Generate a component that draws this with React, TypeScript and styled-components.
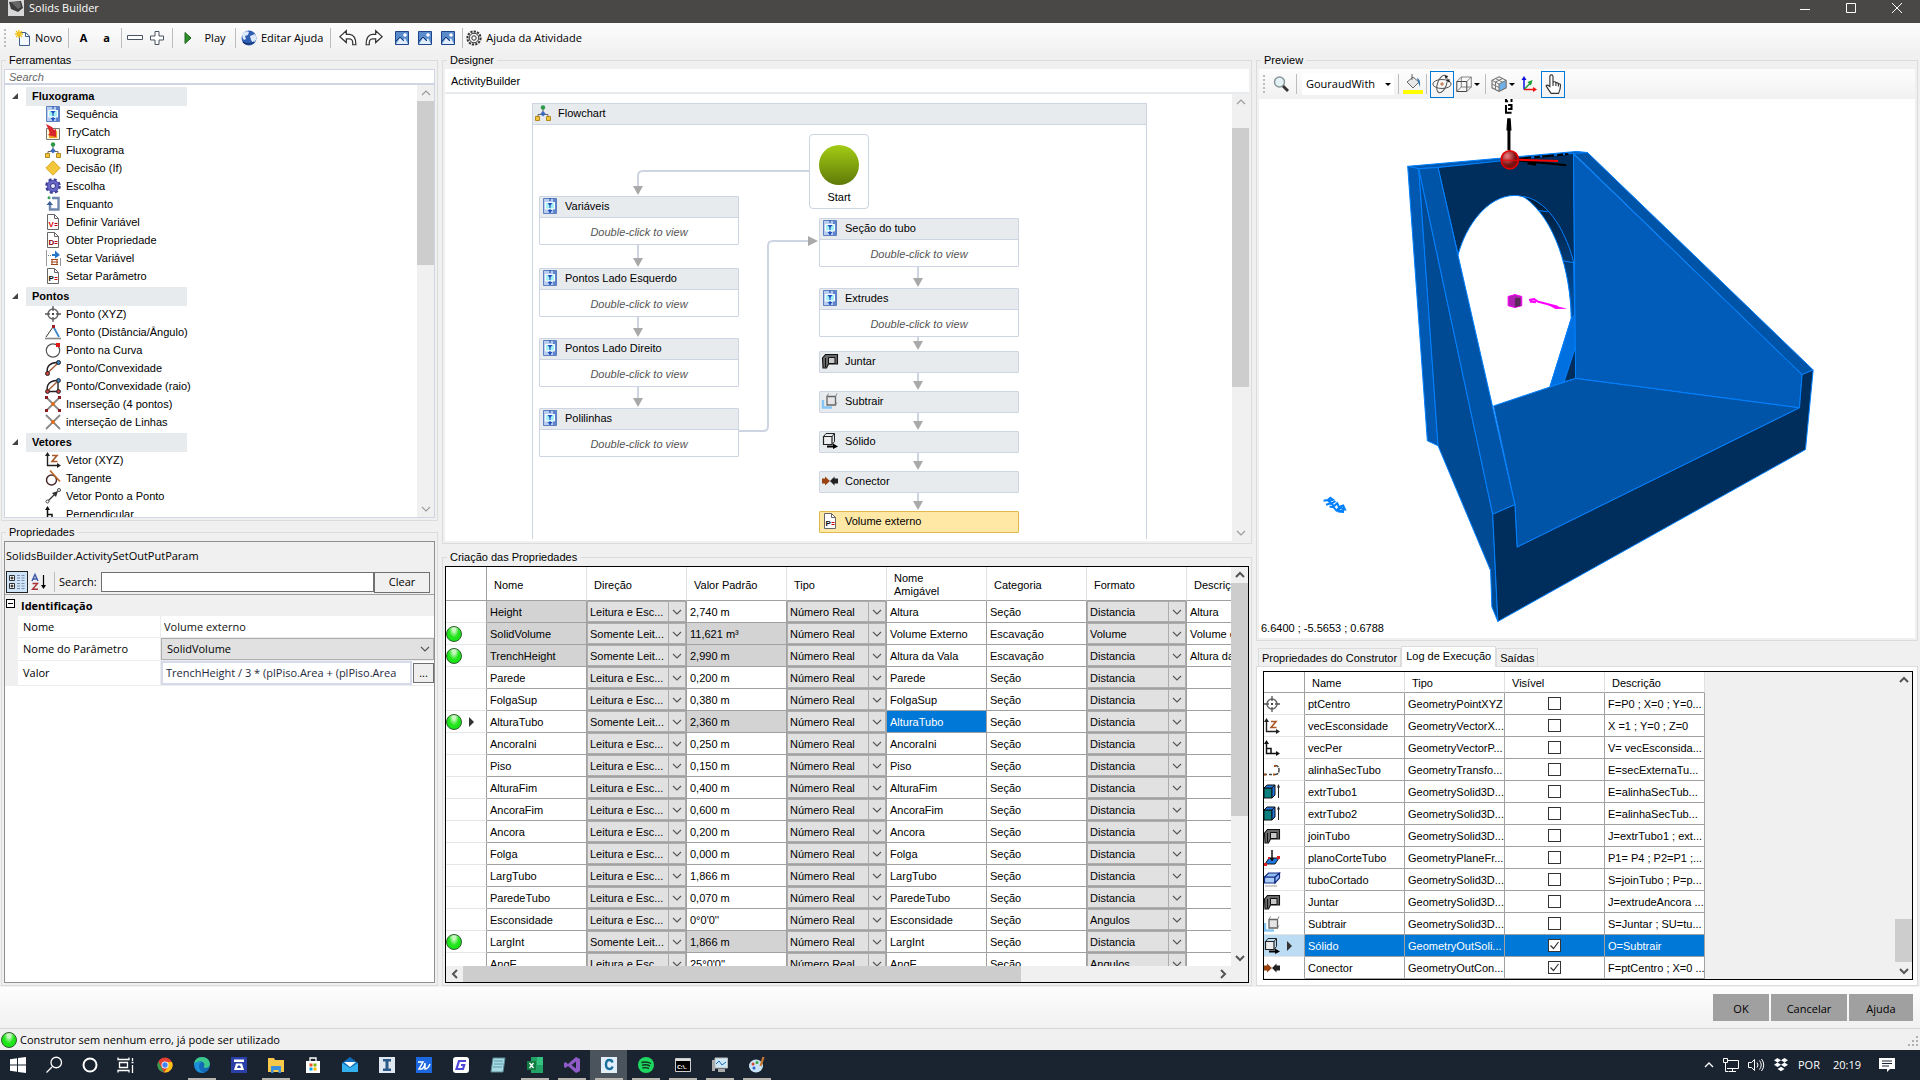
import React from "react";
import styled, { createGlobalStyle, css } from "styled-components";

const SANS = `"Liberation Sans", Arial, sans-serif`;
const SEGOE = `"Open Sans", "Noto Sans", sans-serif`;

const Global = createGlobalStyle`
  *, *::before, *::after { box-sizing: border-box; }
  body { margin: 0; background: #f0f0f0; color: #000; font: 11px/14px ${SANS}; }
  button, input, select { font: inherit; color: inherit; margin: 0; }
`;

/* ---------- icons ---------- */

type IconName =
  | "app" | "new" | "minus" | "plus" | "play" | "globe" | "undo" | "redo" | "picture" | "gear"
  | "sequence" | "trycatch" | "flow" | "decision" | "switch" | "while" | "docV" | "docD" | "docP" | "setvar"
  | "point" | "angle" | "curve" | "bulge" | "bulgeR" | "cross4" | "cross" | "vector" | "tangent" | "p2p" | "perp"
  | "join" | "subtract" | "solid" | "connector" | "align" | "extrude" | "plane" | "cut"
  | "zoom" | "bucket" | "orbit" | "wire" | "shaded" | "axes" | "hand"
  | "categories" | "sort";

const doc = (letter: string, color: string) => (
  <>
    <path d="M2.500 .5h7l4 4v11h-11z" fill="#fff" stroke="#666" />
    <path d="M9.500 .5v4h4" fill="none" stroke="#666" />
    <text x="3.500" y="13" fontSize="8" fontWeight="700" fill={color}>{letter}</text>
    <path d="M9.500 9.500h3M9.500 11.500h3" stroke="#c00000" />
  </>
);

const art: Record<IconName, React.ReactNode> = {
  app: (<><path d="M0 0h16v16H0z" fill="#d8d8d8" /><path d="M1 2l12 -1 2 7 -5 4 -7 -3z" fill="#3c3c3c" /><path d="M3 2l9 0 1 5 -3 2z" fill="#666" /></>),
  new: (<><path d="M4.500 2.500h6l4 3.500v9.500h-10z" fill="#f4f9ff" stroke="#3d5f8f" /><path d="M10.500 2.500v4h4" fill="none" stroke="#3d5f8f" /><path d="M4 0v8M0 4h8M1 1l6 6M7 1l-6 6" stroke="#f0c01c" strokeWidth="1.300" /></>),
  minus: <path d="M.5 5.500h15v4H.5z" fill="#fff" stroke="#4a5564" />,
  plus: <path d="M6 1.500h4v4.500h4.500v4H10v4.500H6V10H1.500V6H6z" fill="#fff" stroke="#4a5564" />,
  play: <path d="M5 2.500l6 5.500 -6 5.500z" fill="#2f8f2a" stroke="#1c641a" />,
  globe: (<><circle cx="8" cy="8" r="7.500" fill="#2f5fb4" /><path d="M1 4q4 -4 7 -2l-1 3 -3 1 1 3 -2 1q-2 -2 -2 -6zM9 6l5 -2q2 3 1 6l-3 3 -2 -3z" fill="#dce9f8" /><path d="M2 12q5 4 11 0" stroke="#16316e" fill="none" strokeWidth="1.500" /></>),
  undo: <path d="M.8 6.800L6.500 1.500v3.200h3q5.500 .5 5.500 9.300h-2.800q.5 -5.300 -3 -5.300H6.500V12z" fill="#fff" stroke="#333" strokeWidth="1.100" />,
  redo: <path d="M15.200 6.800L9.500 1.500v3.200h-3Q1 5.200 1 14h2.800q-.5 -5.300 3 -5.300h2.700V12z" fill="#fff" stroke="#333" strokeWidth="1.100" />,
  picture: (<><path d="M1.500 1.500h13v13h-13z" fill="#5a8ccc" stroke="#1f458c" /><path d="M2 14l4 -6 3 3 2 -3 3 6z" fill="#e3eefb" /><circle cx="11" cy="5" r="1.800" fill="#fff" /><path d="M2 11l4 -4 4 4" stroke="#173a7d" fill="none" /></>),
  gear: (<><circle cx="8" cy="8" r="6.600" fill="#eee" stroke="#333" strokeWidth="2" strokeDasharray="2.200 1.200" /><circle cx="8" cy="8" r="4.800" fill="none" stroke="#333" /><circle cx="8" cy="8" r="2.200" fill="#fff" stroke="#333" /></>),
  sequence: (<><path d="M1.500 .5h13v15h-13z" fill="#b9cdee" stroke="#5b7fc0" /><path d="M11 1h3v14h-3z" fill="#5f86cc" /><path d="M3.500 4.500h9v6.500h-9z" fill="#a4f2f6" stroke="#fff" /><path d="M8 0v3M8 6v4M8 11v4" stroke="#2a56b5" strokeWidth="1.200" /><path d="M5.500 5h5L8 8zM5.500 12h5L8 15z" fill="#1f4fc0" /></>),
  trycatch: (<><path d="M1.500 4.500h13v11h-13z" fill="#fdf6d8" stroke="#777" /><path d="M4 7h8v7H4z" fill="#f0a020" /><path d="M1 0l6 3 2 3 2 -1 0 8 -8 -2 2 -2z" fill="#d8262c" /></>),
  flow: (<><path d="M8 3v5M3 12V9.500h10V12" stroke="#666" fill="none" /><circle cx="8" cy="2.500" r="2.200" fill="#2a9a48" /><path d="M8 6l2.700 2.700L8 11.400 5.300 8.700z" fill="#3d6bc4" /><path d="M.5 11.500h4v4h-4zM11.500 11.500h4v4h-4z" fill="#f0c63c" stroke="#b08a20" /></>),
  decision: <path d="M8 .8L15.200 8 8 15.200 .8 8z" fill="#f4c63a" stroke="#dba92c" />,
  switch: (<><circle cx="8" cy="8" r="6.300" fill="#5757b5" stroke="#3f3f94" strokeWidth="3" strokeDasharray="2.800 2.150" /><circle cx="8" cy="8" r="5.500" fill="#6666c6" /><circle cx="8" cy="8" r="2.500" fill="#e8e8ff" stroke="#33337d" /></>),
  while: (<><path d="M7 2h6.500v11.500H5V8" fill="none" stroke="#7088ad" strokeWidth="2.400" /><path d="M1.500 9l3.300 -4L8 9z" fill="#3c5f96" /><circle cx="4" cy="1.800" r="1.500" fill="#3aa455" /></>),
  docV: doc("V", "#e00000"),
  docD: doc("D", "#8a0010"),
  docP: doc("P", "#111"),
  setvar: (<><path d="M1.500 0v16M15.500 8v8" stroke="#999" /><path d="M3 5.500h3" stroke="#777" strokeDasharray="1 1" /><path d="M7 4l3 0 0 -3.500 5 4.500 -5 3.500V6H7z" fill="#2477c9" /><path d="M6 9.500h7M6 12h7M6 14.500h7M7 9v6M12 9v6" stroke="#a04818" /></>),
  point: (<><circle cx="8" cy="8" r="5" fill="none" stroke="#666" strokeWidth="1.500" /><path d="M8 0v5M8 11V16M0 8h5M11 8H16" stroke="#555" strokeWidth="1.300" /><path d="M7 7h2v2H7z" fill="#444" /></>),
  angle: (<><path d="M0 14.500h16" stroke="#888" strokeWidth="1.600" /><path d="M1 13L8 3" stroke="#333" /><path d="M8.500 3l5.500 10" stroke="#3c86c8" strokeWidth="1.800" fill="none" /><path d="M7 1h3v3H7z" fill="#a02028" /></>),
  curve: (<><circle cx="8" cy="8.500" r="6.700" fill="none" stroke="#555" strokeWidth="1.200" /><path d="M11 1h4v4h-4z" fill="#e01818" /></>),
  bulge: (<><path d="M2.500 13C1 7 5 2 13 2.500" stroke="#222" strokeWidth="1.500" fill="none" /><path d="M2.500 13L13 3" stroke="#a8603a" strokeWidth="1.500" /><circle cx="13.500" cy="2.500" r="2" fill="#3c86c8" stroke="#222" /><circle cx="2.500" cy="13.500" r="2" fill="#d04040" stroke="#222" /></>),
  bulgeR: (<><path d="M2.500 13C1 7 5 2 13 2.500V13.500H3" stroke="#222" strokeWidth="1.400" fill="none" /><path d="M2.500 13L13 3" stroke="#a8603a" strokeWidth="1.500" /><circle cx="13.500" cy="2.500" r="1.900" fill="#3c86c8" stroke="#222" /><circle cx="2.500" cy="13.500" r="1.900" fill="#d04040" stroke="#222" /><circle cx="13.500" cy="13.500" r="1.900" fill="#d04040" stroke="#222" /></>),
  cross4: (<><path d="M2 2l12 12M14 2L2 14" stroke="#888" strokeWidth="1.800" /><path d="M0 0h3v3H0zM13 0h3v3h-3zM0 13h3v3H0zM13 13h3v3h-3z" fill="#8a1c24" /><circle cx="8" cy="8" r="2" fill="#e07020" /></>),
  cross: (<><path d="M1 1l14 14M15 1L1 15" stroke="#888" strokeWidth="1.800" /><circle cx="8" cy="8" r="2" fill="#e07020" /></>),
  vector: (<><path d="M2.500 2v11.500H14" stroke="#222" strokeWidth="1.400" fill="none" /><path d="M0 4l2.500 -4L5 4zM12 11l4 2.500 -4 2.500z" fill="#222" /><path d="M7 3.500h5l-5 6h5.500" stroke="#a85a28" strokeWidth="1.600" fill="none" /></>),
  tangent: (<><circle cx="6.500" cy="10" r="5" fill="none" stroke="#4a2a2a" strokeWidth="1.500" /><path d="M5 .5l10 11" stroke="#c06a2a" strokeWidth="1.700" /></>),
  p2p: (<><path d="M3 13L12 4" stroke="#333" strokeWidth="1.300" /><path d="M7 5l6 -2 -2 6z" fill="#333" /><circle cx="2.500" cy="13.500" r="1.500" fill="#fff" stroke="#444" /><circle cx="14" cy="2" r="1.500" fill="#fff" stroke="#444" /></>),
  perp: (<><path d="M2.500 2v11.500H14M2.500 8.500h4.500v5" stroke="#111" strokeWidth="1.500" fill="none" /><path d="M0 4l2.500 -4L5 4zM12 11l4 2.500 -4 2.500z" fill="#111" /></>),
  join: (<><path d="M.5 5l3 -3.500h12v9.500h-9l-2 4H1z" fill="#6a6a6a" stroke="#111" strokeWidth="1.100" /><path d="M6.500 4.500h6.500v6h-6.500z" fill="#c9c9c9" stroke="#111" /><path d="M3.500 5v9" stroke="#111" /></>),
  subtract: (<><path d="M1 7v7.500h9" stroke="#86c6f4" strokeWidth="2.400" fill="none" /><path d="M5 3.500h8.500v8.500H5z" fill="#e6e6e6" stroke="#666" strokeWidth="1.300" /><path d="M5 3.500l1.500 -3M13.500 3.500l1.500 -3M13.500 12l1.500 -2.500" fill="none" stroke="#888" /></>),
  solid: (<><path d="M1.500 3.500h8.500v8h-8.500z" fill="#eee" stroke="#222" strokeWidth="1.200" /><path d="M1.500 3.500l2.500 -3h8.500v8l-2.500 3M10 3.500l2.500 -3" fill="none" stroke="#222" /><path d="M5 12.500h6V10.500l5 3 -5 2.500V14.500H5z" fill="#000" /></>),
  connector: (<><path d="M0 5.500h3V3.500L8 8l-5 4.500V10.500H0z" fill="#9a4312" /><path d="M16 5.500h-3.500V3.500L8 8l4.500 4.500V10.500H16z" fill="#222" /></>),
  align: (<><path d="M0 12.500h9" stroke="#444" strokeWidth="1.500" strokeDasharray="3 2" /><path d="M11 3.500q4 0 4 4.500t-4 4.500" stroke="#444" fill="none" strokeWidth="1.500" strokeDasharray="4 1" /><path d="M0 11.500h2v2H0zM9 11.500h2v2H9zM10 3h2v2h-2z" fill="#a8521c" /></>),
  extrude: (<><path d="M0 4h8v10H0z" fill="#0c8080" stroke="#111" /><path d="M0 4l3 -3h8L8 4zM8 4l3 -3v10L8 14z" fill="#1e78e0" stroke="#111" /><path d="M14.500 2v12" stroke="#222" /><path d="M13 3.500L14.500 0 16 3.500z" fill="#222" /></>),
  plane: (<><path d="M1 14l4 -6h10l-4 6z" fill="#1e78e0" stroke="#111" /><path d="M8 0v11" stroke="#111" strokeWidth="1.500" /><path d="M0 13h3v3H0zM13 6h3v3h-3zM4 7h2v2H4z" fill="#e02020" /><path d="M5.500 8h5L8 11z" fill="#111" /></>),
  cut: (<><path d="M.5 5h10.500v6H.5z" fill="#a9ccf6" stroke="#142c86" strokeWidth="1.200" /><path d="M.5 5l4 -4h11l-4 4zM11 5l4.500 -4v5l-4.500 5z" fill="#8fbdf2" stroke="#142c86" strokeWidth="1.200" /><path d="M1 13h12v2H1z" fill="#ccc" /></>),
  zoom: (<><circle cx="6.500" cy="6" r="5" fill="#e2f2f5" stroke="#8a979c" strokeWidth="1.500" /><path d="M10 10l5 5" stroke="#333" strokeWidth="2.800" /></>),
  bucket: (<><path d="M2 8l6 -5 6 5 -6 6z" fill="#e8e8e8" stroke="#666" /><path d="M7 0v6" stroke="#666" /><path d="M12 4q4 1 3 9l-2 -5z" fill="#3a78ae" /></>),
  orbit: (<><ellipse cx="8" cy="8" rx="3.600" ry="7.300" fill="none" stroke="#555" strokeWidth=".8" transform="rotate(20 8 8)" /><ellipse cx="8" cy="8" rx="7.300" ry="3.600" fill="none" stroke="#555" strokeWidth=".8" /><path d="M8 6.500v3M6.500 8h3" stroke="#b8622a" strokeWidth=".8" /><path d="M10 1l3 .5 -2 2.500zM14 4l-2.500 1 2.500 2z" fill="#222" /></>),
  wire: (<><path d="M.8 5.500h10v10h-10z" fill="none" stroke="#444" /><path d="M.8 5.500l4.500 -4.500h10v10l-4.500 4.500M10.800 5.500l4.500 -4.500M5.300 1v10h10M5.300 11L.8 15.500" fill="none" stroke="#666" strokeWidth=".8" /></>),
  shaded: (<><path d="M8 .8l7 3.500v7.500L8 15.300 1 11.800V4.300z" fill="#f4f4f4" stroke="#777" strokeWidth="1.200" /><path d="M8 8l7 -3.700v7.500L8 15.300z" fill="#6fb0e6" stroke="#777" /><path d="M1 4.300L8 8M4.500 2.500l7 3.700M4.500 6v7.500M1 8l7 3.500M11.500 2.500L4.500 6" stroke="#777" fill="none" /></>),
  axes: (<><path d="M3 2v11.500" stroke="#1010e0" strokeWidth="1.500" /><path d="M.5 4L3 0l2.500 4z" fill="#1010e0" /><path d="M3 13.500h10" stroke="#f01010" strokeWidth="1.500" /><path d="M12 11l4 2.500 -4 2.500z" fill="#f01010" /><path d="M3.500 13L10 6.500" stroke="#18a030" strokeWidth="1.500" /><path d="M6.500 6l5 -2 -1.500 5.500z" fill="#18a030" /></>),
  hand: <path d="M5.500 10V2q0 -1.300 1.200 -1.300T8 2v4.500q2 -.8 2.300 .5 1.700 -.4 2 .8 1.700 -.3 1.700 1.400 0 3 -1.500 6.300H6.500Q4 12 2.500 9.500q.6 -1.500 3 .5zM8 6.500v3M10.300 7v2.500M12.300 8v2" fill="#fff" stroke="#333" strokeWidth=".9" />,
  categories: (<><path d="M.5 1.500h5v5h-5zM.5 9.500h5v5h-5z" fill="#fff" stroke="#333" /><path d="M1.500 4h3M3 2.500v3M1.500 12h3M3 10.500v3" stroke="#000" /><path d="M8 1.500h3M12.500 1.500h3M8 4h3M12.500 4h3M8 6.500h3M12.500 6.500h3M8 9.500h3M12.500 9.500h3M8 12h3M12.500 12h3M8 14.500h3M12.500 14.500h3" stroke="#7a8db0" /></>),
  sort: (<><path d="M1 7L4 0.500 7 7M2 5h4" fill="none" stroke="#3c56a8" strokeWidth="1.400" /><path d="M1.500 9.500h5L1.500 15.300H7" fill="none" stroke="#a83238" strokeWidth="1.400" /><path d="M12.500 1v12" stroke="#000" strokeWidth="1.200" /><path d="M10 11h5l-2.500 4z" fill="#000" /></>),
};

const IconSvg = styled.svg`
  flex: none;
  display: block;
  overflow: visible;
`;
const Icon = ({ name, size = 16 }: { name: IconName; size?: number }) => (
  <IconSvg width={size} height={size} viewBox="0 0 16 16" aria-hidden="true">{art[name]}</IconSvg>
);

/* ---------- window frame ---------- */

const Window = styled.div`
  display: flex;
  flex-direction: column;
  height: 100vh;
  overflow: hidden;
`;
const TitleBar = styled.header`
  flex: none;
  display: flex;
  align-items: flex-start;
  height: 23px;
  padding-left: 8px;
  background: #4a4846;
  color: #fff;
  font: 11px/16px ${SEGOE};
`;
const Caption = styled.h1`
  flex: 1;
  margin: 0 0 0 5px;
  font: inherit;
`;
const CaptionButton = styled.button`
  width: 46px;
  height: 16px;
  padding: 0;
  border: 0;
  background: none;
  display: grid;
  place-items: center;
`;
const ToolBar = styled.div<{ $h?: number }>`
  flex: none;
  display: flex;
  align-items: center;
  height: ${(p) => p.$h ?? 29}px;
  padding: 0 4px;
  background: linear-gradient(#fdfdfd, #f1f1f1);
  font: 11px/16px ${SEGOE};
`;
const Grip = styled.span`
  width: 2px;
  height: 18px;
  margin-right: 6px;
  background: repeating-linear-gradient(#bdbdbd 0 2px, transparent 2px 4px);
`;
const ToolButton = styled.button<{ $w?: number; $active?: boolean; $bold?: boolean; $gap?: number }>`
  display: flex;
  align-items: center;
  justify-content: ${(p) => (p.$w ? "center" : "flex-start")};
  gap: ${(p) => p.$gap ?? 4}px;
  width: ${(p) => (p.$w ? p.$w + "px" : "auto")};
  height: 27px;
  padding: 0;
  border: ${(p) => (p.$active ? "1px solid #0078d7" : "0")};
  background: none;
  white-space: nowrap;
  font-weight: ${(p) => (p.$bold ? 700 : 400)};
`;
const Separator = styled.span<{ $m?: number }>`
  width: 1px;
  height: 20px;
  margin: 0 ${(p) => p.$m ?? 3}px;
  background: #bdbdbd;
`;
const Caret = styled.span`
  width: 0;
  height: 0;
  border: 3px solid transparent;
  border-top-color: #000;
  border-bottom: 0;
`;

const Main = styled.main`
  flex: 1;
  min-height: 0;
  display: grid;
  grid-template-columns: 437px minmax(0, 1fr) 662px;
  column-gap: 4px;
  padding: 1px 2px 1px 1px;
`;
const Column = styled.div<{ $gap: number }>`
  display: flex;
  flex-direction: column;
  gap: ${(p) => p.$gap}px;
  min-width: 0;
  min-height: 0;
`;
const Group = styled.fieldset<{ $h?: number }>`
  flex: ${(p) => (p.$h ? `0 0 ${p.$h}px` : "1 1 0")};
  min-width: 0;
  min-height: 0;
  margin: 0;
  padding: 2px;
  border: 1px solid #dcdcdc;
  display: flex;
  flex-direction: column;
`;
const Legend = styled.legend`
  margin-left: 2px;
  padding: 0 3px;
  height: 14px;
`;

/* ---------- scroll bars ---------- */

const Bar = styled.div<{ $x?: boolean }>`
  flex: none;
  display: flex;
  flex-direction: ${(p) => (p.$x ? "row" : "column")};
  ${(p) => (p.$x ? "height: 16px;" : "width: 17px;")}
  background: #f0f0f0;
`;
const BarButton = styled.button`
  flex: none;
  width: 17px;
  height: 16px;
  padding: 0;
  border: 0;
  background: none;
  display: grid;
  place-items: center;
`;
const Stretch = styled.span<{ $grow: number; $thumb?: boolean }>`
  flex: ${(p) => p.$grow} 1 0;
  background: ${(p) => (p.$thumb ? "#cdcdcd" : "transparent")};
`;
const turns = { up: 180, down: 0, left: 90, right: 270 };
const Chevron = ({ dir, color = "#555", w = 1.6 }: { dir: keyof typeof turns; color?: string; w?: number }) => (
  <svg width="10" height="10" viewBox="0 0 10 10" aria-hidden="true">
    <path d="M1 3l4 4 4-4" fill="none" stroke={color} strokeWidth={w} transform={`rotate(${turns[dir]} 5 5)`} />
  </svg>
);
const Scroll = ({ x, parts, faint }: { x?: boolean; parts: [number, number, number]; faint?: boolean }) => (
  <Bar $x={x}>
    <BarButton type="button" aria-label={x ? "Esquerda" : "Acima"}><Chevron dir={x ? "left" : "up"} color={faint ? "#999" : "#555"} w={faint ? 1.1 : 2} /></BarButton>
    <Stretch $grow={parts[0]} />
    <Stretch $grow={parts[1]} $thumb />
    <Stretch $grow={parts[2]} />
    <BarButton type="button" aria-label={x ? "Direita" : "Abaixo"}><Chevron dir={x ? "right" : "down"} color={faint ? "#999" : "#555"} w={faint ? 1.1 : 2} /></BarButton>
  </Bar>
);

/* ---------- toolbox ---------- */

const SearchBox = styled.input`
  flex: none;
  height: 15px;
  padding: 0 4px;
  border: 1px solid #cfd5e3;
  background: #fff;
  font-style: italic;
  outline: 0;
  &::placeholder { color: #666; opacity: 1; }
`;
const TreeFrame = styled.div`
  flex: 1;
  min-height: 0;
  display: flex;
  border: 1px solid #cfd5e3;
  background: #fff;
`;
const Tree = styled.div`
  flex: 1;
  overflow: hidden;
`;
const Category = styled.div`
  display: flex;
  align-items: center;
  height: 18px;
  margin-top: 2px;
  padding-left: 6px;
  gap: 7px;
`;
const CategoryName = styled.strong`
  width: 161px;
  height: 19px;
  padding: 0 6px;
  background: #e8ebee;
  line-height: 19px;
`;
const ToolList = styled.ul`
  margin: 0;
  padding: 0 0 0 40px;
  list-style: none;
`;
const ToolItem = styled.li`
  display: flex;
  align-items: center;
  gap: 5px;
  height: 18px;
`;

const toolbox: { name: string; items: [IconName, string][] }[] = [
  { name: "Fluxograma", items: [["sequence", "Sequência"], ["trycatch", "TryCatch"], ["flow", "Fluxograma"], ["decision", "Decisão (If)"], ["switch", "Escolha"], ["while", "Enquanto"], ["docV", "Definir Variável"], ["docD", "Obter Propriedade"], ["setvar", "Setar Variável"], ["docP", "Setar Parâmetro"]] },
  { name: "Pontos", items: [["point", "Ponto (XYZ)"], ["angle", "Ponto (Distância/Ângulo)"], ["curve", "Ponto na Curva"], ["bulge", "Ponto/Convexidade"], ["bulgeR", "Ponto/Convexidade (raio)"], ["cross4", "Inserseção (4 pontos)"], ["cross", "interseção de Linhas"]] },
  { name: "Vetores", items: [["vector", "Vetor (XYZ)"], ["tangent", "Tangente"], ["p2p", "Vetor Ponto a Ponto"], ["perp", "Perpendicular"]] },
];

const Toolbox = () => (
  <Group $h={468}>
    <Legend>Ferramentas</Legend>
    <SearchBox placeholder="Search" aria-label="Search" />
    <TreeFrame>
      <Tree>
        {toolbox.map((c) => (
          <React.Fragment key={c.name}>
            <Category>
              <svg width="8" height="8" viewBox="0 0 8 8" aria-hidden="true"><path d="M7 1v6H1z" fill="#444" /></svg>
              <CategoryName>{c.name}</CategoryName>
            </Category>
            <ToolList>
              {c.items.map(([icon, label]) => (
                <ToolItem key={label}><Icon name={icon} />{label}</ToolItem>
              ))}
            </ToolList>
          </React.Fragment>
        ))}
      </Tree>
      <Scroll faint parts={[0, 164, 237]} />
    </TreeFrame>
  </Group>
);

/* ---------- property grid ---------- */

const PropFrame = styled.div`
  flex: 1;
  display: flex;
  flex-direction: column;
  border: 1px solid #8f8f8f;
  background: #fff;
  font: 11px/16px ${SEGOE};
`;
const PropTitle = styled.div`
  height: 28px;
  padding-left: 1px;
  background: #f0f0f0;
  line-height: 27px;
`;
const PropTools = styled.div`
  display: flex;
  align-items: center;
  height: 25px;
  padding: 0 4px 0 1px;
  border-bottom: 1px solid #a0a0a0;
  background: #f0f0f0;
`;
const ModeButton = styled.button<{ $on?: boolean }>`
  width: 22px;
  height: 22px;
  padding: 0;
  display: grid;
  place-items: center;
  border: ${(p) => (p.$on ? "1px solid #222" : "0")};
  background: ${(p) => (p.$on ? "#cfe4f7" : "none")};
`;
const PropSearch = styled.input`
  flex: 1;
  min-width: 0;
  height: 20px;
  margin-left: 4px;
  border: 1px solid #707070;
  background: #fff;
`;
const ClearButton = styled.button`
  width: 56px;
  height: 21px;
  padding: 0;
  border: 1px solid #707070;
  background: #f0f0f0;
`;
const PropHeading = styled.div`
  display: flex;
  align-items: center;
  gap: 6px;
  height: 21px;
  padding-left: 1px;
  background: #f0f0f0;
  font-weight: 700;
`;
const Expander = styled.span`
  width: 9px;
  height: 9px;
  margin-bottom: 4px;
  border: 1px solid #000;
  background: linear-gradient(#000, #000) center / 5px 1px no-repeat #fff;
`;
const PropRow = styled.div<{ $h: number }>`
  display: grid;
  grid-template-columns: 142px minmax(0, 1fr);
  align-items: center;
  height: ${(p) => p.$h}px;
  margin-left: 13px;
  border-bottom: 1px solid #ececec;
  box-shadow: -13px 0 #f0f0f0;
`;
const PropLabel = styled.label`
  padding-left: 5px;
`;
const PropValue = styled.div`
  display: flex;
  gap: 1px;
  height: 100%;
  border-left: 1px solid #ececec;
`;
const PropInput = styled.input<{ $boxed?: boolean }>`
  flex: 1;
  min-width: 0;
  padding: 0 3px;
  border: ${(p) => (p.$boxed ? "2px solid #d5dbeb" : "0")};
  background: #fff;
  color: ${(p) => (p.$boxed ? "#1e2a3c" : "#111")};
`;
const MoreButton = styled.button`
  width: 21px;
  height: 20px;
  margin-top: 2px;
  padding: 0;
  border: 1px solid #707070;
  background: #eee;
`;
const Picker = styled.div<{ $bright?: boolean }>`
  flex: 1;
  display: grid;
  grid-template-columns: minmax(0, 1fr) 17px;
  align-items: center;
  height: 100%;
  border: 1px solid #adadad;
  background: #e1e1e1;
  & > select {
    grid-area: 1 / 1 / 2 / 3;
    width: 100%;
    height: 100%;
    padding: 0 18px 0 2px;
    appearance: none;
    border: 0;
    border-radius: 0;
    background: none;
    outline: 0;
  }
  & > span {
    grid-area: 1 / 2 / 2 / 3;
    height: 100%;
    display: grid;
    place-items: center;
    border-left: 1px solid #adadad;
    pointer-events: none;
  }
  ${(p) => p.$bright && css`
    & > select { padding-left: 5px; }
    & > span { border: 0; }
  `}
`;
const Combo = ({ value, label, id, bright }: { value: string; label?: string; id?: string; bright?: boolean }) => (
  <Picker $bright={bright}>
    <select id={id} aria-label={label} defaultValue={value}><option>{value}</option></select>
    <span><Chevron dir="down" w={1.1} /></span>
  </Picker>
);

const PropertyPanel = () => (
  <Group>
    <Legend>Propriedades</Legend>
    <PropFrame>
      <PropTitle>SolidsBuilder.ActivitySetOutPutParam</PropTitle>
      <PropTools>
        <ModeButton type="button" $on aria-label="Por categoria"><Icon name="categories" /></ModeButton>
        <ModeButton type="button" aria-label="Alfabética"><Icon name="sort" /></ModeButton>
        <Separator $m={4} />
        <label htmlFor="prop-search">Search:</label>
        <PropSearch id="prop-search" />
        <ClearButton type="button">Clear</ClearButton>
      </PropTools>
      <PropHeading><Expander />Identificação</PropHeading>
      <PropRow $h={22}>
        <PropLabel htmlFor="p-nome">Nome</PropLabel>
        <PropValue><PropInput id="p-nome" defaultValue="Volume externo" /></PropValue>
      </PropRow>
      <PropRow $h={23}>
        <PropLabel htmlFor="p-param">Nome do Parâmetro</PropLabel>
        <PropValue><Combo bright id="p-param" value="SolidVolume" /></PropValue>
      </PropRow>
      <PropRow $h={25}>
        <PropLabel htmlFor="p-valor">Valor</PropLabel>
        <PropValue>
          <PropInput $boxed id="p-valor" defaultValue="TrenchHeight / 3 * (plPiso.Area + (plPiso.Area" />
          <MoreButton type="button">...</MoreButton>
        </PropValue>
      </PropRow>
    </PropFrame>
  </Group>
);

/* ---------- designer ---------- */

const DesignFrame = styled.div`
  flex: 1;
  min-height: 0;
  display: flex;
  flex-direction: column;
  background: #fff;
`;
const Crumb = styled.div`
  flex: none;
  height: 25px;
  padding-left: 6px;
  border-bottom: 2px solid #e8ebee;
  line-height: 24px;
`;
const DesignBody = styled.div`
  flex: 1;
  min-height: 0;
  display: flex;
`;
const Surface = styled.div`
  flex: 1;
  display: flex;
  justify-content: center;
  overflow: hidden;
  padding: 9px 0 2px 2px;
`;
const FlowBox = styled.section`
  display: flex;
  flex-direction: column;
  width: 615px;
  border: 1px solid #cdd4e2;
  border-bottom: 0;
`;
const NodeHead = styled.div<{ $selected?: boolean }>`
  flex: none;
  display: flex;
  align-items: center;
  gap: 7px;
  height: 20px;
  padding: 0 3px 2px 2px;
  background: ${(p) => (p.$selected ? "#ffe8a6" : "#e8ebee")};
`;
const FlowHead = styled(NodeHead)`
  height: 21px;
  border-bottom: 1px solid #cdd4e2;
`;
const FlowCanvas = styled.div`
  position: relative;
  flex: 1;
`;
const Links = styled.svg`
  position: absolute;
  inset: 0;
`;
const Node = styled.article<{ $x: number; $y: number; $selected?: boolean }>`
  position: absolute;
  left: ${(p) => p.$x}px;
  top: ${(p) => p.$y}px;
  width: 200px;
  border: 1px solid ${(p) => (p.$selected ? "#e0b94c" : "#cdd4e2")};
  border-radius: 1px;
  background: #fff;
`;
const NodeHint = styled.div`
  height: 27px;
  border-top: 1px solid #cdd4e2;
  color: #555;
  font-style: italic;
  line-height: 28px;
  text-align: center;
`;
const StartNode = styled.div`
  position: absolute;
  left: 276px;
  top: 9px;
  width: 60px;
  height: 75px;
  padding-top: 10px;
  border: 1px solid #cdd4e2;
  border-radius: 4px;
  background: #fff;
  text-align: center;
`;
const StartDisc = styled.div`
  width: 40px;
  height: 40px;
  margin: 0 auto 5px;
  border-radius: 50%;
  background: linear-gradient(#a3cc14, #5f7a08);
`;

const nodes: { icon: IconName; title: string; x: number; y: number; hint?: boolean; selected?: boolean }[] = [
  { icon: "sequence", title: "Variáveis", x: 6, y: 71, hint: true },
  { icon: "sequence", title: "Pontos Lado Esquerdo", x: 6, y: 143, hint: true },
  { icon: "sequence", title: "Pontos Lado Direito", x: 6, y: 213, hint: true },
  { icon: "sequence", title: "Polilinhas", x: 6, y: 283, hint: true },
  { icon: "sequence", title: "Seção do tubo", x: 286, y: 93, hint: true },
  { icon: "sequence", title: "Extrudes", x: 286, y: 163, hint: true },
  { icon: "join", title: "Juntar", x: 286, y: 226 },
  { icon: "subtract", title: "Subtrair", x: 286, y: 266 },
  { icon: "solid", title: "Sólido", x: 286, y: 306 },
  { icon: "connector", title: "Conector", x: 286, y: 346 },
  { icon: "docP", title: "Volume externo", x: 286, y: 386, selected: true },
];
const drops: [number, number, number][] = [
  [105, 120, 143], [105, 192, 213], [105, 262, 283],
  [385, 142, 163], [385, 212, 226], [385, 248, 266], [385, 288, 306], [385, 328, 346], [385, 368, 386],
];
const headAt = (x: number, tip: number) => `M${x - 5} ${tip - 10}h10l-5 9z`;

const Designer = () => (
  <Group $h={491}>
    <Legend>Designer</Legend>
    <DesignFrame>
      <Crumb>ActivityBuilder</Crumb>
      <DesignBody>
        <Surface>
          <FlowBox>
            <FlowHead><Icon name="flow" />Flowchart</FlowHead>
            <FlowCanvas>
              <Links width="613" height="414" viewBox="0 0 613 414" aria-hidden="true">
                <g fill="none" stroke="#cdd4e2" strokeWidth="2">
                  <path d="M276 46H110q-5 0 -5 5V62" />
                  <path d="M206 306h24q5 0 5 -5V121q0 -5 5 -5H276" />
                  {drops.map(([x, a, b], i) => <path key={i} d={`M${x} ${a}V${b - 9}`} />)}
                </g>
                <g fill="#a9a9a9">
                  <path d={headAt(105, 71)} />
                  <path d="M275 111v10l10 -5z" />
                  {drops.map(([x, , b], i) => <path key={i} d={headAt(x, b)} />)}
                </g>
              </Links>
              <StartNode><StartDisc />Start</StartNode>
              {nodes.map((n) => (
                <Node key={n.title} $x={n.x} $y={n.y} $selected={n.selected}>
                  <NodeHead $selected={n.selected}><Icon name={n.icon} />{n.title}</NodeHead>
                  {n.hint && <NodeHint>Double-click to view</NodeHint>}
                </Node>
              ))}
            </FlowCanvas>
          </FlowBox>
        </Surface>
        <Scroll faint parts={[18, 256, 136]} />
      </DesignBody>
    </DesignFrame>
  </Group>
);

/* ---------- data grids ---------- */

const GridFrame = styled.div`
  flex: 1;
  min-height: 0;
  display: flex;
  border: 1px solid #000;
  background: #f0f0f0;
`;
const GridStack = styled.div`
  flex: 1;
  min-width: 0;
  display: flex;
  flex-direction: column;
`;
const GridClip = styled.div`
  flex: 1;
  min-width: 0;
  min-height: 0;
  overflow: hidden;
`;
const SideBar = styled.div`
  flex: none;
  display: flex;
  padding-bottom: 16px;
`;
const Grid = styled.table<{ $w: number }>`
  width: ${(p) => p.$w}px;
  table-layout: fixed;
  border-collapse: separate;
  border-spacing: 0;
  background: #fff;
`;
const Th = styled.th<{ $h: number }>`
  height: ${(p) => p.$h}px;
  padding: 3px 20px 0 7px;
  border-right: 1px solid #e0e0e0;
  border-bottom: 1px solid #a0a0a0;
  line-height: 13px;
  font-weight: 400;
  text-align: left;
  &:first-child { border-right-color: #a0a0a0; }
`;
const Td = styled.td<{ $shade?: boolean; $picked?: boolean; $combo?: boolean; $center?: boolean }>`
  height: 22px;
  padding: ${(p) => (p.$combo ? 0 : "0 3px")};
  border-right: 1px solid #a0a0a0;
  border-bottom: 1px solid #a0a0a0;
  background: ${(p) => (p.$picked ? "#0078d7" : p.$shade ? "#d3d3d3" : "#fff")};
  color: ${(p) => (p.$picked ? "#fff" : "#000")};
  text-align: ${(p) => (p.$center ? "center" : "left")};
  line-height: 14px;
  white-space: nowrap;
  overflow: hidden;
  & > ${Picker} { height: 21px; }
`;
const RowHead = styled.th<{ $picked?: boolean }>`
  height: 22px;
  padding: 0;
  border-right: 1px solid #a0a0a0;
  border-bottom: 1px solid #e5e5e5;
  background: ${(p) => (p.$picked ? "#bcdcf4" : "#fff")};
`;
const RowMarks = styled.div`
  display: flex;
  align-items: center;
  gap: 7px;
`;
const Lamp = styled.span`
  width: 16px;
  height: 16px;
  border: 1px solid #2b5a2b;
  border-radius: 50%;
  background: radial-gradient(ellipse at 50% 15%, #c9f7c0 0 15%, #22e61c 50%, #0fe00f);
`;
const Pointer = styled.span`
  border: 5px solid transparent;
  border-left-color: #333;
  border-right: 0;
`;
const Tick = styled.input`
  display: block;
  appearance: none;
  width: 13px;
  height: 13px;
  margin: 0 auto;
  border: 1px solid #333;
  background: #fff;
  &:checked {
    background: #fff url("data:image/svg+xml,%3Csvg xmlns='http://www.w3.org/2000/svg' viewBox='0 0 11 11'%3E%3Cpath d='M1.5 5.500l3 3 5-6.500' fill='none' stroke='%23333' stroke-width='1.200'/%3E%3C/svg%3E");
  }
`;

const LE = "Leitura e Esc...";
const SL = "Somente Leit...";
type Param = { n: string; d: string; v: string; a: string; c: string; f: string; t?: string; ro?: boolean; ok?: boolean; cur?: boolean };
const P = (n: string, v: string, extra: Partial<Param> = {}): Param => ({ n, d: LE, v, a: n, c: "Seção", f: "Distancia", ...extra });
const params: Param[] = [
  P("Height", "2,740 m", { a: "Altura", t: "Altura", ro: true }),
  P("SolidVolume", "11,621 m³", { d: SL, a: "Volume Externo", c: "Escavação", f: "Volume", t: "Volume externo", ro: true, ok: true }),
  P("TrenchHeight", "2,990 m", { d: SL, a: "Altura da Vala", c: "Escavação", t: "Altura da Vala", ro: true, ok: true }),
  P("Parede", "0,200 m"),
  P("FolgaSup", "0,380 m"),
  P("AlturaTubo", "2,360 m", { d: SL, ok: true, cur: true }),
  P("AncoraIni", "0,250 m"),
  P("Piso", "0,150 m"),
  P("AlturaFim", "0,400 m"),
  P("AncoraFim", "0,600 m"),
  P("Ancora", "0,200 m"),
  P("Folga", "0,000 m"),
  P("LargTubo", "1,866 m"),
  P("ParedeTubo", "0,070 m"),
  P("Esconsidade", "0°0'0''", { f: "Angulos" }),
  P("LargInt", "1,866 m", { d: SL, ok: true }),
  P("AngE", "25°0'0''", { f: "Angulos" }),
];

const ParamGrid = () => (
  <Group>
    <Legend>Criação das Propriedades</Legend>
    <GridFrame>
      <GridStack>
        <GridClip>
          <Grid $w={841}>
            <colgroup><col width="41" />{Array.from({ length: 8 }, (_, i) => <col key={i} width="100" />)}</colgroup>
            <thead>
              <tr>
                <Th $h={34} />
                {["Nome", "Direção", "Valor Padrão", "Tipo", "Nome Amigável", "Categoria", "Formato", "Descrição"].map((h) => <Th key={h} $h={34} scope="col">{h}</Th>)}
              </tr>
            </thead>
            <tbody>
              {params.map((p) => (
                <tr key={p.n}>
                  <RowHead><RowMarks>{p.ok && <Lamp />}{p.cur && <Pointer />}</RowMarks></RowHead>
                  <Td $shade={p.ro}>{p.n}</Td>
                  <Td $combo><Combo label="Direção" value={p.d} /></Td>
                  <Td $shade={p.d === SL}>{p.v}</Td>
                  <Td $combo><Combo label="Tipo" value="Número Real" /></Td>
                  <Td $picked={p.cur}>{p.a}</Td>
                  <Td>{p.c}</Td>
                  <Td $combo><Combo label="Formato" value={p.f} /></Td>
                  <Td>{p.t}</Td>
                </tr>
              ))}
            </tbody>
          </Grid>
        </GridClip>
        <Scroll x parts={[0, 558, 193]} />
      </GridStack>
      <SideBar><Scroll parts={[0, 233, 134]} /></SideBar>
    </GridFrame>
  </Group>
);

/* ---------- preview ---------- */

const ShadeSelect = styled.div`
  display: grid;
  grid-template-columns: minmax(0, 1fr) 12px;
  align-items: center;
  width: 92px;
  height: 22px;
  background: #fff;
  & > select {
    grid-area: 1 / 1 / 2 / 2;
    width: 100%;
    padding: 0 0 0 4px;
    appearance: none;
    border: 0;
    background: none;
    outline: 0;
  }
  & > ${Caret} { justify-self: center; }
`;
const Swatch = styled.span`
  display: grid;
  justify-items: center;
  width: 20px;
  border-bottom: 4px solid #ff0;
`;
const Viewport = styled.div`
  flex: 1;
  min-height: 0;
  display: flex;
  flex-direction: column;
  justify-content: space-between;
  overflow: hidden;
  background: #fff;
`;
const Scene = styled.svg`
  flex: none;
  display: block;
  & path, & polygon { vector-effect: non-scaling-stroke; }
`;
const Coords = styled.output`
  margin-top: -18px;
  padding: 0 2px 4px;
`;

const Model = () => (
  <Scene width="658" height="540" viewBox="21 128 1540 1411" preserveAspectRatio="none" role="img" aria-label="Modelo 3D">
    <defs>
      <linearGradient id="rim" x1="0" y1="0" x2="0" y2="1"><stop offset="0" stopColor="#001a35" /><stop offset="1" stopColor="#0056ac" /></linearGradient>
      <radialGradient id="ball" cx=".35" cy=".3"><stop offset="0" stopColor="#f08080" /><stop offset="1" stopColor="#7a1010" /></radialGradient>
    </defs>
    <g stroke="#0080ff" strokeWidth="1" strokeLinejoin="round">
      <polygon points="369,304 765,265 790,268 757,272 440,307 395,310" fill="#0058b0" />
      <path d="M440 307L757 270 762 858 702 880 752 700C752 560 700 380 620 380 555 380 505 460 487 535z" fill="#002e5c" />
      <path d="M640 383C690 390 735 460 757 552L760 700 752 702C750 580 715 440 640 383z" fill="url(#rim)" />
      <path d="M673 419l24 4M733 551l25 5" fill="none" />
      <polygon points="752,702 762,690 762,775 735,867 702,880" fill="#0070e0" />
      <polygon points="762,775 762,858 735,867" fill="#002e5c" />
      <polygon points="757,272 1292,848 1286,935 762,858" fill="#005cb8" />
      <polygon points="757,270 790,268 1318,836 1292,848" fill="#0054a8" />
      <polygon points="570,930 762,858 1286,935 625,1299 620,1188" fill="#0054a8" />
      <polygon points="369,304 395,310 440,1034 415,1021" fill="#0058b0" />
      <polygon points="395,310 568,1213 580,1493 566,1455 563,1360 440,1034" fill="#004a94" />
      <polygon points="395,310 440,307 620,1188 568,1213" fill="#0054a8" />
      <polygon points="568,1213 620,1188 625,1299 1286,935 1292,848 1318,836 1300,1044 580,1493" fill="#002e5c" />
    </g>
    <g fill="none" stroke="#000">
      <path d="M606 262V185" strokeWidth="3" />
      <path d="M630 284L745 272" strokeWidth="2" strokeDasharray="12 3 6 2" />
      <path d="M625 288L740 301" strokeWidth="2" />
      <path d="M650 292l20 4" strokeWidth="5" />
      <path d="M599 128v6h5M612 128v8M599 144v20h13M604 144h8v10h-8" strokeWidth="2" />
    </g>
    <path d="M600 210l2-32h8l2 32z" fill="#000" />
    <path d="M630 287L721 290" stroke="#f00" strokeWidth="2" />
    <ellipse cx="608" cy="287" rx="20" ry="24" fill="url(#ball)" stroke="#e00000" strokeWidth="4" />
    <path d="M588 288h40" stroke="#f00" />
    <path d="M604 644l16-5 16 5v24l-16 5-16-5z" fill="#b020b0" stroke="#f0f" />
    <path d="M620 648h13v20l-13 4z" fill="#5a2a5a" />
    <path d="M653 653l12-2 8 6 47 14M655 657l14 2" stroke="#f0f" strokeWidth="2" fill="none" />
    <path d="M690 662l53 14-28 1z" fill="#f0f" />
    <path d="M172 1178l10-2 6-6 6 5-10 4 6 6 10-6M178 1188l12-4 6 8 8-8 4 10 10-4 4 10-12-4-4 8 14 0M186 1193l10 2 6 8 6-6M206 1206l14 1" fill="none" stroke="#0080ff" strokeWidth="2" />
  </Scene>
);

const Preview = () => (
  <Group $h={588}>
    <Legend>Preview</Legend>
    <ToolBar $h={30}>
      <Grip />
      <ToolButton type="button" $w={20} aria-label="Zoom"><Icon name="zoom" /></ToolButton>
      <Separator $m={5} />
      <ShadeSelect>
        <select aria-label="Sombreamento" defaultValue="GouraudWith"><option>GouraudWith</option></select>
        <Caret />
      </ShadeSelect>
      <Separator $m={4} />
      <ToolButton type="button" $w={20} aria-label="Cor"><Swatch><Icon name="bucket" /></Swatch></ToolButton>
      <Separator />
      <ToolButton type="button" $w={24} $active aria-label="Órbita"><Icon name="orbit" size={20} /></ToolButton>
      <ToolButton type="button" $w={27} $gap={2} aria-label="Vista"><Icon name="wire" /><Caret /></ToolButton>
      <Separator $m={4} />
      <ToolButton type="button" $w={26} $gap={2} aria-label="Estilo"><Icon name="shaded" /><Caret /></ToolButton>
      <ToolButton type="button" $w={25} aria-label="Eixos"><Icon name="axes" /></ToolButton>
      <ToolButton type="button" $w={24} $active aria-label="Mover"><Icon name="hand" size={20} /></ToolButton>
    </ToolBar>
    <Viewport>
      <Model />
      <Coords>6.6400 ; -5.5653 ; 0.6788</Coords>
    </Viewport>
  </Group>
);

/* ---------- log tabs ---------- */

const Tabs = styled.div`
  flex: 1;
  min-height: 0;
  display: flex;
  flex-direction: column;
`;
const TabStrip = styled.div`
  display: flex;
  align-items: flex-end;
  height: 20px;
  padding-left: 2px;
`;
const Tab = styled.button<{ $on?: boolean }>`
  height: ${(p) => (p.$on ? 21 : 18)}px;
  margin-bottom: ${(p) => (p.$on ? -1 : 0)}px;
  padding: ${(p) => (p.$on ? "0 4px 2px" : "0 3px")};
  border: 1px solid #dcdcdc;
  border-bottom: 0;
  background: ${(p) => (p.$on ? "#fff" : "#f0f0f0")};
  z-index: ${(p) => (p.$on ? 1 : 0)};
`;
const TabPage = styled.div`
  flex: 1;
  min-height: 0;
  display: flex;
  padding: 4px 4px 5px 6px;
  border: 1px solid #dcdcdc;
  background: #fff;
`;

const log: [IconName, string, string, string, boolean?, boolean?][] = [
  ["point", "ptCentro", "GeometryPointXYZ", "F=P0 ; X=0 ; Y=0..."],
  ["vector", "vecEsconsidade", "GeometryVectorX...", "X =1 ; Y=0 ; Z=0"],
  ["perp", "vecPer", "GeometryVectorP...", "V= vecEsconsida..."],
  ["align", "alinhaSecTubo", "GeometryTransfo...", "E=secExternaTu..."],
  ["extrude", "extrTubo1", "GeometrySolid3D...", "E=alinhaSecTub..."],
  ["extrude", "extrTubo2", "GeometrySolid3D...", "E=alinhaSecTub..."],
  ["join", "joinTubo", "GeometrySolid3D...", "J=extrTubo1 ; ext..."],
  ["plane", "planoCorteTubo", "GeometryPlaneFr...", "P1= P4 ; P2=P1 ;..."],
  ["cut", "tuboCortado", "GeometrySolid3D...", "S=joinTubo ; P=p..."],
  ["join", "Juntar", "GeometrySolid3D...", "J=extrudeAncora ..."],
  ["subtract", "Subtrair", "GeometrySolid3D...", "S=Juntar ; SU=tu..."],
  ["solid", "Sólido", "GeometryOutSoli...", "O=Subtrair", true, true],
  ["connector", "Conector", "GeometryOutCon...", "F=ptCentro ; X=0 ...", true],
];

const LogPanel = () => (
  <Tabs>
    <TabStrip role="tablist">
      <Tab type="button" role="tab">Propriedades do Construtor</Tab>
      <Tab type="button" role="tab" $on aria-selected="true">Log de Execução</Tab>
      <Tab type="button" role="tab">Saídas</Tab>
    </TabStrip>
    <TabPage>
      <GridFrame>
        <GridClip>
          <Grid $w={441}>
            <colgroup><col width="41" /><col width="100" /><col width="100" /><col width="100" /><col width="100" /></colgroup>
            <thead><tr><Th $h={21} />{["Name", "Tipo", "Visível", "Descrição"].map((h) => <Th key={h} $h={21} scope="col">{h}</Th>)}</tr></thead>
            <tbody>
              {log.map(([icon, name, type, desc, on, cur]) => (
                <tr key={name}>
                  <RowHead $picked={cur}><RowMarks><Icon name={icon} />{cur && <Pointer />}</RowMarks></RowHead>
                  <Td $picked={cur}>{name}</Td>
                  <Td $picked={cur}>{type}</Td>
                  <Td $picked={cur} $center><Tick type="checkbox" defaultChecked={on} aria-label={`Visível: ${name}`} /></Td>
                  <Td $picked={cur}>{desc}</Td>
                </tr>
              ))}
            </tbody>
          </Grid>
        </GridClip>
        <Scroll parts={[231, 43, 1]} />
      </GridFrame>
    </TabPage>
  </Tabs>
);

/* ---------- footer ---------- */

const Actions = styled.div`
  flex: none;
  display: flex;
  justify-content: flex-end;
  gap: 2px;
  height: 42px;
  padding: 7px 7px 7px 0;
  border-bottom: 1px solid #d7d7d7;
  background: linear-gradient(#fdfdfd, #f1f1f1);
  font: 11px/16px ${SEGOE};
`;
const ActionButton = styled.button<{ $w: number }>`
  width: ${(p) => p.$w}px;
  height: 27px;
  padding: 2px 0 0;
  border: 0;
  background: #a0a0a0;
`;
const Status = styled.div`
  flex: none;
  display: flex;
  align-items: center;
  gap: 3px;
  height: 21px;
  padding: 0 2px 0 1px;
  font: 11px/16px ${SEGOE};
`;
const StatusText = styled.span`
  flex: 1;
`;
const TaskBar = styled.nav`
  flex: none;
  display: flex;
  align-items: stretch;
  height: 30px;
  background: #1a2430;
  color: #fff;
  font: 11px/16px ${SEGOE};
`;
const Task = styled.button<{ $w?: number; $open?: boolean; $current?: boolean }>`
  width: ${(p) => p.$w ?? 37}px;
  padding: 2px 0 0;
  border: 0;
  border-bottom: 2px solid transparent;
  background-color: ${(p) => (p.$current ? "#4b535c" : "transparent")};
  display: grid;
  place-items: center;
  ${(p) => p.$open && css`
    background-image: linear-gradient(#b8b4b0, #b8b4b0);
    background-size: 28px 2px;
    background-position: center bottom;
    background-origin: border-box;
    background-clip: border-box;
    background-repeat: no-repeat;
  `}
`;
const TaskGap = styled.span`
  width: 2px;
`;
const Tray = styled.div`
  display: flex;
  align-items: center;
  gap: 9px;
  margin-left: auto;
  padding-right: 25px;
`;
const Clock = styled.time`
  margin: 0 9px 0 4px;
`;

const G = ({ children }: { children: React.ReactNode }) => (
  <IconSvg width="16" height="16" viewBox="0 0 16 16" aria-hidden="true">{children}</IconSvg>
);
const system: [string, React.ReactNode][] = [
  ["Iniciar", <path d="M0 2.300l7-1v6.200H0zM8 1.100L16 0v7.500H8zM0 8.500h7v6.200l-7-1zM8 8.500h8V16l-8-1.100z" fill="#fff" />],
  ["Pesquisar", <path d="M.5 15.500l5.500-5.500M5 5.500a5 5 0 1 0 10.500 0 5 5 0 1 0-10.500 0" fill="none" stroke="#fff" strokeWidth="1.300" />],
  ["Cortana", <circle cx="8" cy="8" r="6.500" fill="none" stroke="#fff" strokeWidth="2" />],
  ["Visão de tarefas", <path d="M0 .5v2h11v-2M1.500 5.500h8v5h-8zM0 15.500v-2h11v2M14.500 1v3M14.500 8v8M13.500 5.500h2" fill="none" stroke="#fff" strokeWidth="1.300" />],
];
const tasks: [string, React.ReactNode, boolean?, boolean?][] = [
  ["Chrome", <><circle cx="8" cy="8" r="7.500" fill="#e34133" /><path d="M1.300 4.500L7 15.400A7.500 7.500 0 0 1 1.300 4.500z" fill="#2f9e4f" /><path d="M15 5H8l3 5-4 5.400A7.500 7.500 0 0 0 15 5z" fill="#fbc116" /><circle cx="8" cy="8" r="3.500" fill="#fff" /><circle cx="8" cy="8" r="2.700" fill="#4285f4" /></>],
  ["Edge", <><circle cx="8" cy="8" r="8" fill="#1468b8" /><path d="M0 7Q1 0 8 0t8 7q-.5 4-5 4-2-1-.5-3Q10 4 6 4.500 2 5 0 7z" fill="#3cc88c" /><path d="M0 7q3-3.500 8-2-3 1-3 5 1 5 6 5.500Q1 17 0 7z" fill="#1c8fd8" /></>, true],
  ["Editor", <><path d="M0 0h16v16H0z" fill="#2a40a8" /><path d="M3 2.500h10v2.500H3zM5 6.500h6l2 6.500H3z" fill="#fff" /><path d="M7 8.500h2l1 2.500H6z" fill="#2a40a8" /></>],
  ["Arquivos", <><path d="M0 1h6l1 2h9v12H0z" fill="#f8c84a" /><path d="M3 9h10v7h-2.500v-3h-5v3H3z" fill="#3c8fdc" /></>, true],
  ["Loja", <><path d="M1 4h14v12H1z" fill="#fff" /><path d="M5 4V1h6v3" fill="none" stroke="#fff" strokeWidth="1.300" /><path d="M4.500 6.500h3v3h-3z" fill="#f25022" /><path d="M8.500 6.500h3v3h-3z" fill="#7fba00" /><path d="M4.500 10.500h3v3h-3z" fill="#00a4ef" /><path d="M8.500 10.500h3v3h-3z" fill="#ffb900" /></>],
  ["E-mail", <><path d="M0 6l8-6 8 6v9H0z" fill="#0f6cbd" /><path d="M2 5h12L8 10z" fill="#fff" /><path d="M0 6l8 5 8-5v9H0z" fill="#35b0ee" /></>],
  ["Inventor", <><path d="M0 0h16v16H0z" fill="#dfe8f0" /><path d="M4 2h8v2.500H9.500v7H12V14H4v-2.500h2.500v-7H4z" fill="#2c5a88" /></>],
  ["Modelador", <><path d="M0 0h16v16H0z" fill="#1c68e0" /><path d="M2 5h5l-4 7h3q3-2 3-6v6q3 0 5-5" fill="none" stroke="#fff" strokeWidth="1.500" /></>],
  ["G", <><rect width="16" height="16" rx="3" fill="#fff" /><path d="M13 4H6L3.500 12H10l1.200-4H8" fill="none" stroke="#5048d8" strokeWidth="2.200" /></>],
  ["Bloco de notas", <><path d="M3 1h12l-2 14H1z" fill="#a8dbe4" stroke="#5a8a94" /><path d="M4 4h9M4 7h9M3 10h9" stroke="#5a9aa8" /></>],
  ["Excel", <><path d="M4 0h12v16H4z" fill="#21a366" /><path d="M10 0h6v8h-6z" fill="#33c481" /><path d="M0 4h9v9H0z" fill="#107c41" /><path d="M2.500 6l4 5M6.500 6l-4 5" stroke="#fff" strokeWidth="1.300" /></>, true],
  ["Visual Studio", <><path d="M12 0l4 2v12l-4 2-8-7-2.500 2L0 10V6l1.500-1L4 7z" fill="#8e5bc8" /><path d="M12 4.500v7L7.500 8z" fill="#1a2430" /></>, true],
  ["Civil 3D", <><path d="M0 0h16v16H0z" fill="#e2eef8" /><path d="M11.500 5.500Q11 3 8.500 3 5 3 5 7.500T8.500 12q2.500 0 3-2.500" fill="none" stroke="#17719c" strokeWidth="2.400" /></>, true, true],
  ["Spotify", <><circle cx="8" cy="8" r="8" fill="#1ed760" /><path d="M3.500 5.500q5-1.500 9.500 1M4 8.300q4.500-1.300 8 .8M4.500 11q3.500-1 6.500 .6" fill="none" stroke="#12301c" strokeWidth="1.400" /></>, true],
  ["Terminal", <><path d="M.5 1.500h15v13H.5z" fill="#000" stroke="#ccc" /><path d="M1 2h14v2H1z" fill="#ddd" /><text x="2" y="12" fontSize="6" fontWeight="700" fill="#fff">C:\.</text></>, true],
  ["Monitor", <><path d="M3 1h12.500v10H3z" fill="#cfe8f6" stroke="#bbb" /><path d="M4 7l3-3 3 4 4-3" fill="none" stroke="#1c68c0" /><path d="M0 3h3v11H0zM6 12h7v3H6z" fill="#aaa" /></>, true],
  ["Paint", <><ellipse cx="7" cy="9" rx="7" ry="6.500" fill="#c8e4f4" /><circle cx="4" cy="7" r="1.500" fill="#e04030" /><circle cx="8" cy="5.500" r="1.500" fill="#40a840" /><circle cx="5" cy="11" r="1.500" fill="#3060d0" /><path d="M14.500 0l-3 9" stroke="#c87830" strokeWidth="2.200" /></>, true],
];

export default function App() {
  return (
    <Window>
      <Global />
      <TitleBar>
        <Icon name="app" />
        <Caption>Solids Builder</Caption>
        <CaptionButton type="button" aria-label="Minimizar"><svg width="10" height="10"><path d="M0 6.500h10" stroke="#fff" /></svg></CaptionButton>
        <CaptionButton type="button" aria-label="Maximizar"><svg width="10" height="10"><path d="M.5 .5h9v9h-9z" stroke="#fff" fill="none" /></svg></CaptionButton>
        <CaptionButton type="button" aria-label="Fechar"><svg width="10" height="10"><path d="M0 0l10 10M10 0L0 10" stroke="#fff" /></svg></CaptionButton>
      </TitleBar>
      <ToolBar>
        <Grip />
        <ToolButton type="button" $w={53}><Icon name="new" />Novo</ToolButton>
        <Separator />
        <ToolButton type="button" $w={23} $bold>A</ToolButton>
        <ToolButton type="button" $w={23} $bold>a</ToolButton>
        <Separator />
        <ToolButton type="button" $w={20} aria-label="Recolher"><Icon name="minus" /></ToolButton>
        <ToolButton type="button" $w={24} aria-label="Expandir"><Icon name="plus" /></ToolButton>
        <Separator />
        <ToolButton type="button" $w={54} $gap={8}><Icon name="play" />Play</ToolButton>
        <Separator $m={5} />
        <ToolButton type="button"><Icon name="globe" />Editar Ajuda</ToolButton>
        <Separator $m={7} />
        <ToolButton type="button" $w={20} aria-label="Desfazer"><Icon name="undo" size={18} /></ToolButton>
        <ToolButton type="button" $w={32} aria-label="Refazer"><Icon name="redo" size={18} /></ToolButton>
        {[1, 2, 3].map((i) => <ToolButton key={i} type="button" $w={23} aria-label={`Imagem ${i}`}><Icon name="picture" /></ToolButton>)}
        <Separator />
        <ToolButton type="button"><Icon name="gear" />Ajuda da Atividade</ToolButton>
      </ToolBar>
      <Main>
        <Column $gap={4}><Toolbox /><PropertyPanel /></Column>
        <Column $gap={6}><Designer /><ParamGrid /></Column>
        <Column $gap={5}><Preview /><LogPanel /></Column>
      </Main>
      <Actions>
        <ActionButton type="button" $w={56}>OK</ActionButton>
        <ActionButton type="button" $w={76}>Cancelar</ActionButton>
        <ActionButton type="button" $w={64}>Ajuda</ActionButton>
      </Actions>
      <Status>
        <Lamp />
        <StatusText>Construtor sem nenhum erro, já pode ser utilizado</StatusText>
        <svg width="12" height="12" aria-hidden="true"><path d="M10 2h2v2h-2zM6 6h2v2H6zM10 6h2v2h-2zM2 10h2v2H2zM6 10h2v2H6zM10 10h2v2h-2z" fill="#b0b0b0" /></svg>
      </Status>
      <TaskBar>
        {system.map(([n, g]) => <Task key={n} type="button" $w={36} aria-label={n}><G>{g}</G></Task>)}
        <TaskGap />
        {tasks.map(([n, g, open, cur]) => <Task key={n} type="button" $open={open} $current={cur} aria-label={n}><G>{g}</G></Task>)}
        <Tray>
          <Chevron dir="up" color="#fff" w={1.3} />
          <G><path d="M4 3.500h11.500v8H4M9.500 11.500v3M6 14.500h7M.5 1.500h4v4h-4zM2.500 5.500v9h3" fill="none" stroke="#fff" /></G>
          <G><path d="M.5 5.500h3l3-3v11l-3-3h-3z" fill="none" stroke="#fff" /><path d="M9 5.500q2 2.500 0 5M11.500 3.500q3.500 4.500 0 9M13.500 2q4.500 6 0 12" fill="none" stroke="#fff" /></G>
          <G><path d="M4.500 1L8 3.300 4.500 5.500 1 3.300zM11.500 1L15 3.300l-3.500 2.200L8 3.300zM4.500 5.500L8 7.800 4.500 10 1 7.800zM11.500 5.500L15 7.800 11.500 10 8 7.800zM8 9.800l3.500 2.200L8 14.200 4.500 12z" fill="#fff" /></G>
          <span>POR</span>
          <Clock>20:19</Clock>
          <G><path d="M0 1h16v11h-5l-3 3v-3H0z" fill="#fff" /><path d="M3 4h10M3 6.500h10M3 9h7" stroke="#1a2430" /></G>
        </Tray>
      </TaskBar>
    </Window>
  );
}
